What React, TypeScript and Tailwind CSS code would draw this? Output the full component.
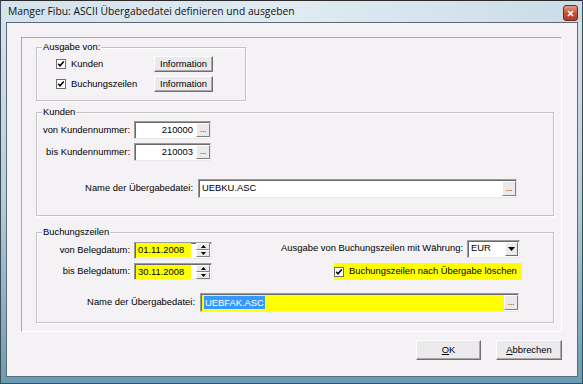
import type { ReactNode } from 'react';

const Check = () => (
  <span className="w-[10px] h-[10px] border border-[#6d6d6d] bg-white flex items-center justify-center shrink-0">
    <svg width="8" height="8" viewBox="0 0 8 8">
      <path d="M1.2 3.8 L3 5.8 L6.8 1.4" fill="none" stroke="#000" strokeWidth="1.5" />
    </svg>
  </span>
);

const Group = ({ label, className, children }: { label: string; className: string; children: ReactNode }) => (
  <div className={`relative border border-[#c3bfc3] shadow-[inset_1px_1px_0_#ffffff,1px_1px_0_#ffffff] ${className}`}>
    <span className="absolute -top-[7px] left-[5px] px-[1px] bg-[#f4f2f5] leading-[12px]">{label}</span>
    {children}
  </div>
);

const Dots = ({ h }: { h: string }) => (
  <span
    className={`w-[14px] ${h} bg-[#ece9ec] border border-t-white border-l-white border-r-[#808080] border-b-[#808080] flex items-end justify-center pb-[2px] text-[8px] leading-[8px] shrink-0`}
  >
    ...
  </span>
);

const NumField = ({ value }: { value: string }) => (
  <div className="w-[77px] h-[18px] bg-white border border-t-[#9c9c9c] border-l-[#9c9c9c] border-r-[#e8e8e8] border-b-[#e8e8e8] shadow-[inset_1px_1px_0_#6a6a6a] flex items-center">
    <span className="flex-1 text-right pr-[3px]">{value}</span>
    <Dots h="h-[14px]" />
  </div>
);

const DateField = ({ value }: { value: string }) => (
  <div className="w-[78px] h-[17px] bg-white border border-t-[#9c9c9c] border-l-[#9c9c9c] border-r-[#e8e8e8] border-b-[#e8e8e8] shadow-[inset_1px_1px_0_#6a6a6a] flex items-center pl-[1px]">
    <span className="w-[55px] h-[14px] bg-[#ffff00] pl-[2px] leading-[14px]">{value}</span>
    <div className="ml-auto mr-[1px] w-[14px] h-[14px] flex flex-col">
      <span className="flex-1 bg-[#ece9ec] border border-t-white border-l-white border-r-[#808080] border-b-[#808080] flex items-center justify-center">
        <svg width="5" height="3" viewBox="0 0 5 3"><path d="M0 3 L2.5 0 L5 3Z" fill="#000" /></svg>
      </span>
      <span className="flex-1 bg-[#ece9ec] border border-t-white border-l-white border-r-[#808080] border-b-[#808080] flex items-center justify-center">
        <svg width="5" height="3" viewBox="0 0 5 3"><path d="M0 0 L2.5 3 L5 0Z" fill="#000" /></svg>
      </span>
    </div>
  </div>
);

const NameField = ({ children, yellow }: { children: ReactNode; yellow?: boolean }) => (
  <div className="w-[319px] h-[19px] bg-white border border-t-[#9c9c9c] border-l-[#9c9c9c] border-r-[#e8e8e8] border-b-[#e8e8e8] shadow-[inset_1px_1px_0_#6a6a6a] flex items-center pl-[1px]">
    <div className={`flex-1 h-[16px] flex items-center pl-[2px] ${yellow ? 'bg-[#ffff00]' : ''}`}>{children}</div>
    <Dots h="h-[15px]" />
  </div>
);

export default function App() {
  return (
    <div className="w-[583px] h-[384px] overflow-hidden border border-[#3e4c56] border-t-[#2a2a2a] bg-gradient-to-b from-[#d8e5ee] via-[#b8cedb] to-[#6a9bb2] flex flex-col font-['Liberation_Sans',Arial,sans-serif] text-[9.4px] text-black">
      {/* Title bar */}
      <div className="h-[21px] flex items-center pl-[7px] pr-[4px] bg-gradient-to-r from-[#d3e2ec] via-[#e0ebf2] to-[#cbdce8]">
        <span className="font-['Open_Sans',sans-serif] text-[10.3px] text-[#111]">
          Manger Fibu: ASCII Übergabedatei definieren und ausgeben
        </span>
        <span className="ml-auto mt-[3px] w-[15px] h-[16px] rounded-[3px] border border-[#6b2a20] bg-gradient-to-b from-[#e59a86] via-[#c8513b] to-[#b53a25] flex items-center justify-center">
          <svg width="7" height="7" viewBox="0 0 7 7">
            <path d="M1 1 L6 6 M6 1 L1 6" stroke="#fff" strokeWidth="1.6" />
          </svg>
        </span>
      </div>

      {/* Client area */}
      <div className="ml-[5px] w-[572px] h-[355px] border border-[#5b6c78] bg-[#f4f2f5] flex flex-col">
        <div className="ml-[14px] mt-[14px] w-[541px] h-[295px] border border-t-[#a9a9a9] border-l-[#a9a9a9] border-r-white border-b-white flex flex-col">
          {/* Ausgabe von */}
          <Group label="Ausgabe von:" className="ml-[14px] mt-[9px] w-[210px] h-[54px] flex flex-col pl-[19px] pt-[8px] gap-[4px]">
            {['Kunden', 'Buchungszeilen'].map((t) => (
              <div key={t} className="flex items-center h-[16px]">
                <div className="w-[98px] flex items-center gap-[5px]">
                  <Check />
                  <span>{t}</span>
                </div>
                <span className="w-[59px] h-[16px] bg-[#ece9ec] border border-t-white border-l-white border-r-[#6f6f6f] border-b-[#6f6f6f] shadow-[inset_-1px_-1px_0_#a8a8a8] flex items-center justify-center">
                  Information
                </span>
              </div>
            ))}
          </Group>

          {/* Kunden */}
          <Group label="Kunden" className="ml-[14px] mt-[11px] w-[518px] h-[104px] flex flex-col pt-[8px]">
            <div className="flex items-center h-[18px]">
              <span className="w-[93px] text-right mr-[4px]">von Kundennummer:</span>
              <NumField value="210000" />
            </div>
            <div className="flex items-center h-[18px] mt-[4px]">
              <span className="w-[93px] text-right mr-[4px]">bis Kundennummer:</span>
              <NumField value="210003" />
            </div>
            <div className="flex items-center h-[19px] mt-[18px]">
              <span className="w-[156px] text-right mr-[5px]">Name der Übergabedatei:</span>
              <NameField>UEBKU.ASC</NameField>
            </div>
          </Group>

          {/* Buchungszeilen */}
          <Group label="Buchungszeilen" className="ml-[14px] mt-[16px] w-[518px] h-[91px] flex flex-col pt-[6px]">
            <div className="flex items-center h-[19px]">
              <span className="w-[93px] text-right mr-[4px] mt-[3px]">von Belegdatum:</span>
              <div className="mt-[3px]">
                <DateField value="01.11.2008" />
              </div>
              <div className="ml-auto mr-[33px] flex items-center">
                <span className="mr-[4px]">Ausgabe von Buchungszeilen mit Währung:</span>
                <div className="w-[53px] h-[18px] bg-white border border-t-[#9c9c9c] border-l-[#9c9c9c] border-r-[#e8e8e8] border-b-[#e8e8e8] shadow-[inset_1px_1px_0_#6a6a6a] flex items-center pl-[3px]">
                  <span>EUR</span>
                  <span className="ml-auto mr-[1px] w-[13px] h-[14px] bg-[#ece9ec] border border-t-white border-l-white border-r-[#6f6f6f] border-b-[#6f6f6f] flex items-center justify-center">
                    <svg width="7" height="4" viewBox="0 0 7 4"><path d="M0 0 L3.5 4 L7 0Z" fill="#000" /></svg>
                  </span>
                </div>
              </div>
            </div>
            <div className="flex items-center h-[19px] mt-[4px]">
              <span className="w-[93px] text-right mr-[4px]">bis Belegdatum:</span>
              <DateField value="30.11.2008" />
              <div className="ml-auto mr-[31px] w-[188px] h-[17px] bg-[#ffff00] flex items-center">
                <Check />
                <span className="ml-[5px]">Buchungszeilen nach Übergabe löschen</span>
              </div>
            </div>
            <div className="flex items-center h-[19px] mt-[12px]">
              <span className="w-[158px] text-right mr-[5px]">Name der Übergabedatei:</span>
              <NameField yellow>
                <span className="bg-[#3399ff] text-white px-[1px] leading-[13px]">UEBFAK.ASC</span>
              </NameField>
            </div>
          </Group>
        </div>

        {/* Buttons */}
        <div className="flex justify-end gap-[15px] mr-[15px] mt-[8px]">
          <span className="w-[65px] h-[20px] bg-[#ece9ec] border border-t-white border-l-white border-r-[#6f6f6f] border-b-[#6f6f6f] shadow-[inset_-1px_-1px_0_#a8a8a8] flex items-center justify-center">
            <span><u className="underline-offset-1">O</u>K</span>
          </span>
          <span className="w-[66px] h-[20px] bg-[#ece9ec] border border-t-white border-l-white border-r-[#6f6f6f] border-b-[#6f6f6f] shadow-[inset_-1px_-1px_0_#a8a8a8] flex items-center justify-center">
            <span><u className="underline-offset-1">A</u>bbrechen</span>
          </span>
        </div>
      </div>
    </div>
  );
}
